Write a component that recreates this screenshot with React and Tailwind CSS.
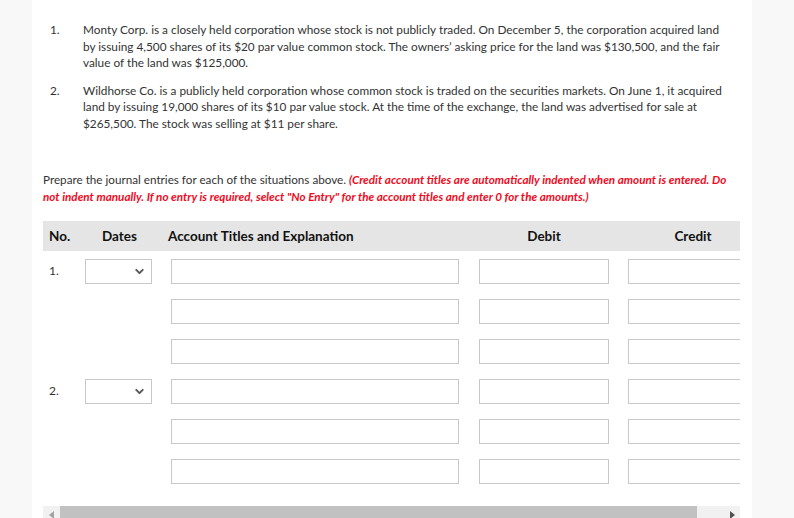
import { ChevronDown } from "lucide-react";

const rows = [
  { no: "1.", date: true },
  { no: "", date: false },
  { no: "", date: false },
  { no: "2.", date: true },
  { no: "", date: false },
  { no: "", date: false },
];

function Row({ no, date }) {
  return (
    <div className="flex items-center h-[40px]">
      <div className="w-[42px] pl-[6px] text-[12px] text-[#333]">{no}</div>
      <div className="w-[86px]">
        {date && (
          <div className="w-[67px] h-[25px] border border-[#c8c8c8] bg-white flex items-center justify-end pr-[5px]">
            <ChevronDown size={13} strokeWidth={3.5} className="text-[#555]" />
          </div>
        )}
      </div>
      <div className="w-[288px] h-[25px] border border-[#c8c8c8] bg-white" />
      <div className="w-[20px]" />
      <div className="w-[130px] h-[25px] border border-[#c8c8c8] bg-white" />
      <div className="w-[19px]" />
      <div className="w-[130px] h-[25px] border border-[#c8c8c8] bg-white shrink-0" />
    </div>
  );
}

export default function App() {
  return (
    <div
      className="flex w-[794px] h-[518px] overflow-hidden bg-[#f8f8f8] text-[#333]"
      style={{ fontFamily: "Lato, 'Open Sans', sans-serif" }}
    >
      <div className="w-[32px] shrink-0" />
      <div className="w-[720px] shrink-0 bg-white">
        <ol className="pt-[22px] pl-[18px] text-[11.8px] leading-[16.5px]">
          <li className="flex">
            <span className="w-[33px] shrink-0">1.</span>
            <p className="w-[645px]">
              Monty Corp. is a closely held corporation whose stock is not publicly traded. On December 5, the corporation acquired land by issuing 4,500 shares of its $20 par value common stock. The owners’ asking price for the land was $130,500, and the fair value of the land was $125,000.
            </p>
          </li>
          <li className="flex mt-[11px]">
            <span className="w-[33px] shrink-0">2.</span>
            <p className="w-[645px]">
              Wildhorse Co. is a publicly held corporation whose common stock is traded on the securities markets. On June 1, it acquired land by issuing 19,000 shares of its $10 par value stock. At the time of the exchange, the land was advertised for sale at $265,500. The stock was selling at $11 per share.
            </p>
          </li>
        </ol>

        <p className="mt-[39px] ml-[11px] w-[695px] text-[11.7px] leading-[16.5px]">
          Prepare the journal entries for each of the situations above.{" "}
          <span className="italic font-bold text-[#f00a1e]">
            (Credit account titles are automatically indented when amount is entered. Do not indent manually. If no entry is required, select "No Entry" for the account titles and enter 0 for the amounts.)
          </span>
        </p>

        <div className="mt-[17px] ml-[11px] w-[697px] overflow-hidden">
          <div className="w-[730px]">
            <div className="flex items-center h-[30px] bg-[#e5e5e5] text-[13.5px] font-bold text-[#111]">
              <div className="w-[59px] shrink-0 pl-[6px]">No.</div>
              <div className="w-[66px] shrink-0">Dates</div>
              <div className="w-[311px] shrink-0">Account Titles and Explanation</div>
              <div className="w-[130px] shrink-0 text-center">Debit</div>
              <div className="w-[19px] shrink-0" />
              <div className="w-[130px] shrink-0 text-center">Credit</div>
            </div>
            <div>
              {rows.map((r, i) => (
                <Row key={i} {...r} />
              ))}
            </div>
          </div>
          <div className="mt-[15px] h-[17px] w-[697px] bg-[#f1f1f1] flex items-center">
            <div className="w-[17px] h-full flex items-center justify-center">
              <svg width="5" height="8" viewBox="0 0 5 8">
                <path d="M5 0 L0 4 L5 8 Z" fill="#a3a3a3" />
              </svg>
            </div>
            <div className="w-[637px] h-full bg-[#c1c1c1]" />
            <div className="flex-1 h-full flex items-center justify-end pr-[5px]">
              <svg width="5" height="8" viewBox="0 0 5 8">
                <path d="M0 0 L5 4 L0 8 Z" fill="#505050" />
              </svg>
            </div>
          </div>
        </div>
      </div>
      <div className="flex-1" />
    </div>
  );
}
